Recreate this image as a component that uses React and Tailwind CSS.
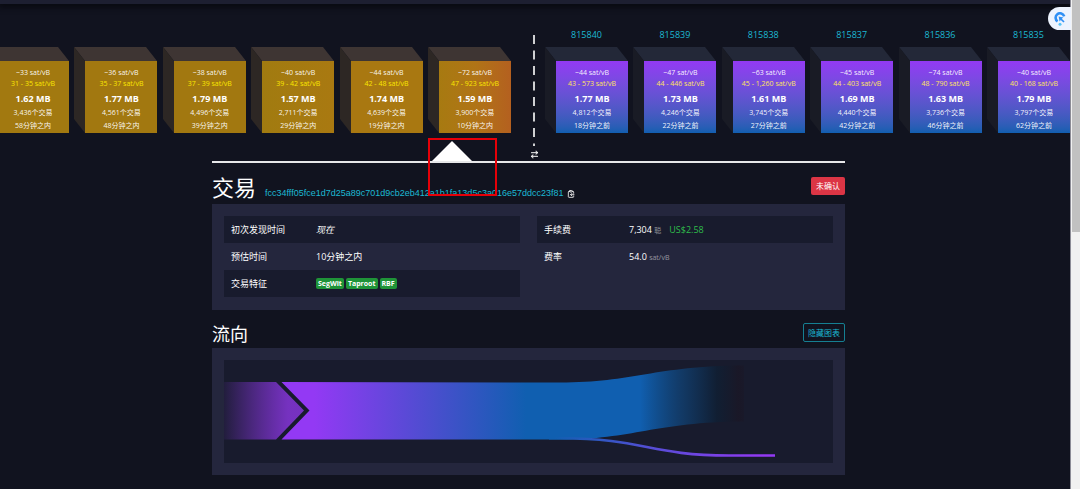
import clsx from "clsx";
import { ArrowRightLeft, ClipboardCopy } from "lucide-react";

const mempoolBlocks = [
  { fee: "~33", range: "31 - 35", size: "1.62 MB", txs: "3,436", time: "58分钟之内", face: "bg-[#a27910]" },
  { fee: "~36", range: "35 - 37", size: "1.77 MB", txs: "4,561", time: "48分钟之内", face: "bg-[#a27810]" },
  { fee: "~38", range: "37 - 39", size: "1.79 MB", txs: "4,496", time: "39分钟之内", face: "bg-[#a27810]" },
  { fee: "~40", range: "39 - 42", size: "1.57 MB", txs: "2,711", time: "29分钟之内", face: "bg-linear-to-r from-[#a17b10] to-[#a97911]" },
  { fee: "~44", range: "42 - 48", size: "1.74 MB", txs: "4,639", time: "19分钟之内", face: "bg-[#a97811]" },
  { fee: "~72", range: "47 - 923", size: "1.59 MB", txs: "3,900", time: "10分钟之内", face: "bg-linear-to-r from-[#a77a11] via-[#b07416] to-[#b4601f]", selected: true },
];

const minedBlocks = [
  { height: 815840, fee: "~44", range: "43 - 573", size: "1.77 MB", txs: "4,812", time: "18分钟之前" },
  { height: 815839, fee: "~47", range: "44 - 446", size: "1.73 MB", txs: "4,246", time: "22分钟之前" },
  { height: 815838, fee: "~63", range: "45 - 1,260", size: "1.61 MB", txs: "3,745", time: "27分钟之前" },
  { height: 815837, fee: "~45", range: "44 - 403", size: "1.69 MB", txs: "4,440", time: "42分钟之前" },
  { height: 815836, fee: "~74", range: "48 - 790", size: "1.63 MB", txs: "3,736", time: "46分钟之前" },
  { height: 815835, fee: "~40", range: "40 - 168", size: "1.79 MB", txs: "3,797", time: "62分钟之前" },
];

function Cube({ block, mined }) {
  return (
    <div className="relative pl-[11px] pt-[14px]">
      <svg className="absolute left-0 top-0" width="83" height="86" viewBox="0 0 83 86" aria-hidden="true">
        <path d="M0 0H72L83 14H11Z" fill={mined ? "#232838" : "#3e3533"} />
        <path d="M0 0L11 14V86L0 72Z" fill={mined ? "#191b25" : "#2d2724"} />
      </svg>
      <div
        className={clsx(
          "relative flex h-[72px] w-[72px] flex-col items-center whitespace-nowrap pt-1.5 text-[7px] text-white/95",
          mined ? "bg-linear-to-b from-[#9339f4] to-[#105fb0]" : block.face
        )}
      >
        <div className="leading-[11px]">{block.fee} sat/vB</div>
        <div className={clsx("leading-[11px]", mined ? "text-[#ffe45c]" : "text-[#fbe600]")}>
          {block.range} sat/vB
        </div>
        <div className="mt-0.5 text-[9px] font-bold leading-[15px] text-white">{block.size}</div>
        <div className="leading-[13px]">{block.txs}个交易</div>
        <div className="leading-[13px]">{block.time}</div>
      </div>
      {block.selected && (
        <>
          <svg className="absolute left-1 top-[94px]" width="40" height="20" viewBox="0 0 40 20" aria-hidden="true">
            <path d="M20 0L40 20H0Z" fill="#fff" />
          </svg>
          <div className="absolute left-0 top-[91px] z-10 h-[58px] w-[69px] border-2 border-[#e60008]" />
        </>
      )}
    </div>
  );
}

function Blockchain() {
  return (
    <section className="flex h-[157px]">
      <div className="-ml-[14px] flex flex-1 justify-between pr-[18px] pt-[43px]">
        {mempoolBlocks.map((block) => (
          <Cube key={block.range} block={block} />
        ))}
      </div>
      <div className="mr-0.5 flex w-[10px] shrink-0 flex-col items-center pt-[31px] text-white/80">
        <svg width="2" height="111" viewBox="0 0 2 111" aria-hidden="true">
          <path d="M1 0V111" stroke="currentColor" strokeWidth="2" strokeDasharray="9 6.5" />
        </svg>
        <ArrowRightLeft className="mt-1 size-[9px]" strokeWidth={3} />
      </div>
      <div className="flex flex-1 justify-between pl-1 pt-6">
        {minedBlocks.map((block) => (
          <div key={block.height} className="text-center">
            <a href="#block" className="mb-[5px] block text-[9px] leading-[14px] text-[#1cb9d3]">{block.height}</a>
            <Cube block={block} mined />
          </div>
        ))}
      </div>
    </section>
  );
}

function InfoTable({ rows }) {
  return (
    <table className="w-full flex-1 table-fixed text-left text-[9px]">
      <tbody>
        {rows.map(([label, value]) => (
          <tr key={label} className="h-[27px] odd:bg-[#181b2d]">
            <th scope="row" className="w-[85px] px-[7px] font-normal">{label}</th>
            <td className="px-[7px]">{value}</td>
          </tr>
        ))}
      </tbody>
    </table>
  );
}

function Feature({ children }) {
  return (
    <span className="rounded-xs bg-[#1f9438] px-0.5 text-[7px] font-bold leading-[11px]">{children}</span>
  );
}

function FlowDiagram() {
  return (
    <svg className="block w-full bg-[#181b2d]" viewBox="0 0 609 103" role="img" aria-label="流向">
      <defs>
        <linearGradient id="input" gradientUnits="userSpaceOnUse" x1="0" x2="80" y1="0" y2="0">
          <stop offset="0" stopColor="#9339f4" stopOpacity="0.08" />
          <stop offset="0.8" stopColor="#8034d0" stopOpacity="0.9" />
          <stop offset="1" stopColor="#8034d0" stopOpacity="0.9" />
        </linearGradient>
        <linearGradient id="band" gradientUnits="userSpaceOnUse" x1="0" x2="530" y1="0" y2="0">
          <stop offset="0.17" stopColor="#9339f4" />
          <stop offset="0.57" stopColor="#105fb0" />
          <stop offset="0.785" stopColor="#105fb0" />
          <stop offset="0.86" stopColor="#0f4c88" stopOpacity="0.65" />
          <stop offset="0.93" stopColor="#0e2035" stopOpacity="0.7" />
          <stop offset="0.97" stopColor="#1a1726" stopOpacity="0.8" />
          <stop offset="1" stopColor="#1a1726" stopOpacity="0" />
        </linearGradient>
        <linearGradient id="fee" gradientUnits="userSpaceOnUse" x1="330" x2="540" y1="0" y2="0">
          <stop offset="0" stopColor="#105fb0" />
          <stop offset="0.5" stopColor="#5a4cd8" />
          <stop offset="1" stopColor="#9339f4" />
        </linearGradient>
      </defs>
      <path d="M0 22H52L80 50.5L52 79.5H0Z" fill="url(#input)" />
      <path
        d="M57.5 22L336 22.5C410 22.5 430 6 520 5.5V61.5C430 62 410 79.5 336 79.5H57.5L85.5 50.5Z"
        fill="url(#band)"
      />
      <path d="M325 78.3H336C420 78.3 425 95.5 505 95.5H551" fill="none" stroke="url(#fee)" strokeWidth="2.6" />
    </svg>
  );
}

export default function App() {
  return (
    <div className="relative flex min-h-screen overflow-hidden bg-[#11131f] font-['Open_Sans','Noto_Sans_CJK_SC',sans-serif] text-white">
      <div className="min-w-0 flex-1">
        <header className="h-1 bg-[#1d1f31] shadow-[0_1px_6px_2px_#08090f]" />
        <Blockchain />

        <main className="pr-[13px]">
          <div className="mx-auto max-w-[633px] border-t-2 border-white/90">
            <div className="mb-0.5 mt-[9px] flex items-start justify-between">
              <div className="flex items-baseline gap-[9px]">
                <h1 className="text-[22px] leading-[30px]">交易</h1>
                <div className="flex items-center gap-1 text-[9px]">
                  <a href="#tx" className="font-['Liberation_Sans',sans-serif] text-[#1cb9d3]">
                    fcc34fff05fce1d7d25a89c701d9cb2eb412a1b1fa13d5c3a016e57ddcc23f81
                  </a>
                  <button type="button" aria-label="复制">
                    <ClipboardCopy className="size-2 text-white/80" strokeWidth={3} />
                  </button>
                </div>
              </div>
              <button type="button" className="mt-[5px] rounded-xs bg-[#dc3545] px-[5px] text-[8px] leading-[18px]">
                未确认
              </button>
            </div>

            <section className="flex items-start gap-[17px] bg-[#24263d] px-3 pb-[13px] pt-3">
              <InfoTable
                rows={[
                  ["初次发现时间", <i>现在</i>],
                  ["预估时间", "10分钟之内"],
                  [
                    "交易特征",
                    <div className="flex gap-0.5">
                      <Feature>SegWit</Feature>
                      <Feature>Taproot</Feature>
                      <Feature>RBF</Feature>
                    </div>,
                  ],
                ]}
              />
              <InfoTable
                rows={[
                  [
                    "手续费",
                    <>
                      7,304 <span className="text-[7px] text-white/50">聪</span>
                      <span className="ml-2 text-[#2fbb4b]">US$2.58</span>
                    </>,
                  ],
                  ["费率", <>54.0 <span className="text-[7px] text-white/50">sat/vB</span></>],
                ]}
              />
            </section>

            <div className="mt-[11px] flex items-start justify-between">
              <h2 className="text-lg leading-[27px]">流向</h2>
              <button
                type="button"
                className="mt-0.5 rounded-xs border border-[#157f92] px-1 text-[8px] leading-[17px] text-[#1cb9d3]"
              >
                隐藏图表
              </button>
            </div>
            <section className="bg-[#24263d] p-3">
              <FlowDiagram />
            </section>
          </div>
        </main>
      </div>

      <div className="w-[10px] shrink-0 border-l border-[#8c8c96] bg-[#f1f1f1] pl-px">
        <div className="h-[232px] bg-[#c1c1c1]" />
      </div>

      <button
        type="button"
        aria-label="助手"
        className="absolute right-[9px] top-[7px] flex h-[23px] w-[23px] items-center justify-center rounded-l-full bg-[#edf3fe]"
      >
        <svg width="12" height="14" viewBox="0 0 12 14" fill="none" aria-hidden="true">
          <path d="M10.2 4.4A4.4 4.4 0 1 0 3.6 9.4" stroke="#2f8ff5" strokeWidth="2.6" />
          <path d="M4.6 4.4L9.4 5.6L7.8 6.8L10.6 9.6L9.4 10.6L6.8 8L5.6 9.4Z" fill="#2f8ff5" />
          <circle cx="6" cy="12.2" r="1.5" fill="#58c4f8" />
        </svg>
      </button>
    </div>
  );
}
